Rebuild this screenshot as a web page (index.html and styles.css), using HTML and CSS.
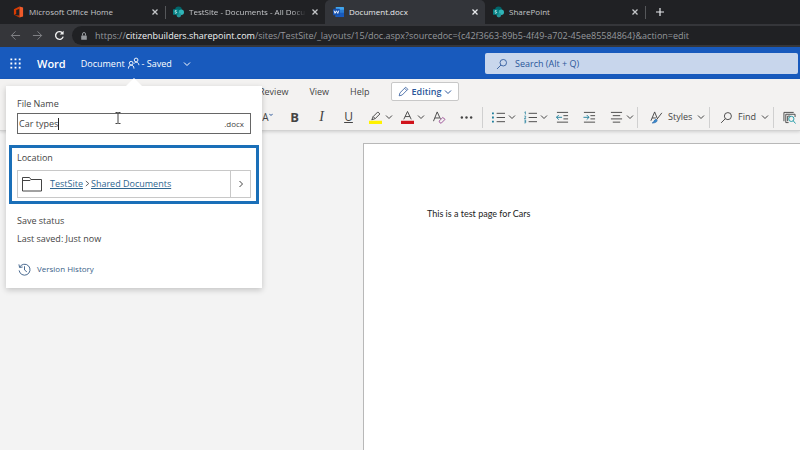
FILE: index.html
```html
<!DOCTYPE html>
<html lang="en">
<head>
    <meta charset="UTF-8">
    <meta name="viewport" content="width=device-width, initial-scale=1.0">
    <title>Document.docx</title>
    <link rel="stylesheet" href="styles.css">
</head>
<body>
    <svg class="defs" width="0" height="0" aria-hidden="true">
        <symbol id="close" viewBox="0 0 8 8"><path d="M1.5 1.5l5 5M6.5 1.5l-5 5" stroke-width="1.3"/></symbol>
        <symbol id="chevron" viewBox="0 0 8 8"><path d="M1 2.5l3 3 3-3"/></symbol>
        <symbol id="sharepoint" viewBox="0 0 12 12">
            <g stroke="none">
                <circle cx="6" cy="3.6" r="3.6" fill="#03656a"/>
                <circle cx="9" cy="6.3" r="3" fill="#2fb5b8"/>
                <circle cx="6.4" cy="9.4" r="2.5" fill="#25979b"/>
                <rect y="3" width="6" height="6" rx="0.6" fill="#038387"/>
            </g>
            <path d="M4 4.7c-.6-.5-1.9-.4-1.9.4 0 .9 1.9.6 1.9 1.5 0 .8-1.4.9-2 .4" stroke="#fff" stroke-width="0.8"/>
        </symbol>
        <symbol id="search" viewBox="0 0 14 14"><circle cx="8.5" cy="5.5" r="3.8"/><path d="M5.8 8.2l-4.6 4.6"/></symbol>
    </svg>

    <nav class="browser-tabs">
        <div class="tab">
            <svg class="favicon solid" viewBox="0 0 12 12"><path d="M1 3l6-3v2.700L3.500 3.800v4.400L1 9.200z" fill="#d83b01"/><path d="M1.500 9.400L7 9.800V12z" fill="#c43501"/><path d="M7 0l4 1.200v9.600L7 12z" fill="#ef5a2a"/></svg>
            <span class="tab-title">Microsoft Office Home</span>
            <button class="tab-close" aria-label="Close tab"><svg class="small"><use href="#close"/></svg></button>
        </div>
        <div class="tab divided">
            <svg class="favicon"><use href="#sharepoint"/></svg>
            <span class="tab-title fade">TestSite - Documents - All Documents</span>
            <button class="tab-close" aria-label="Close tab"><svg class="small"><use href="#close"/></svg></button>
        </div>
        <div class="tab active">
            <svg class="favicon solid" viewBox="0 0 12 12"><rect x="3" y="0.5" width="9" height="11" rx="0.6" fill="#41a5ee"/><path d="M3 3.5h9v3H3z" fill="#2b7cd3"/><path d="M3 6.5h9v5H3z" fill="#185abd"/><rect y="2.500" width="7.500" height="7" rx="0.5" fill="#1650ad"/><path d="M1.200 4.500l1 3 1.500-2.800 1.500 2.800 1-3" fill="none" stroke="#fff"/></svg>
            <span class="tab-title">Document.docx</span>
            <button class="tab-close" aria-label="Close tab"><svg class="small"><use href="#close"/></svg></button>
        </div>
        <div class="tab">
            <svg class="favicon"><use href="#sharepoint"/></svg>
            <span class="tab-title">SharePoint</span>
            <button class="tab-close" aria-label="Close tab"><svg class="small"><use href="#close"/></svg></button>
        </div>
        <button class="new-tab" aria-label="New tab"><svg class="small" viewBox="0 0 8 8"><path d="M4 0v8M0 4h8" stroke-width="1.2"/></svg></button>
    </nav>

    <div class="address-bar">
        <button class="nav-button" aria-label="Back"><svg class="nav-icon" viewBox="0 0 12 12"><path d="M11 6H1.5M6 1.5L1.5 6 6 10.5"/></svg></button>
        <button class="nav-button" aria-label="Forward"><svg class="nav-icon" viewBox="0 0 12 12"><path d="M1 6h9.5M6 1.5L10.5 6 6 10.5"/></svg></button>
        <button class="nav-button reload" aria-label="Reload"><svg class="nav-icon" viewBox="0 0 12 12"><path d="M10 7.2A4.2 4.2 0 1 1 9 3.1" stroke-width="1.5"/><path d="M10.5 0.8v4.2H6.3z" fill="currentColor" stroke="none"/></svg></button>
        <div class="omnibox">
            <svg class="small" viewBox="0 0 8 8"><rect x="1.2" y="3.4" width="5.6" height="4.4" rx="0.5" fill="currentColor" stroke="none"/><path d="M2.5 3.5V2a1.5 1.5 0 0 1 3 0v1.5"/></svg>
            <span class="url">https://<b>citizenbuilders.sharepoint.com</b>/sites/TestSite/_layouts/15/doc.aspx?sourcedoc={c42f3663-89b5-4f49-a702-45ee85584864}&amp;action=edit</span>
        </div>
    </div>

    <header class="app-header">
        <button class="waffle" aria-label="App launcher"><svg class="icon solid" viewBox="0 0 14 14"><path d="M1.5 1.5h2v2h-2zM6 1.5h2v2H6zM10.500 1.500h2v2h-2zM1.500 6h2v2h-2zM6 6h2v2H6zM10.500 6h2v2h-2zM1.500 10.500h2v2h-2zM6 10.500h2v2H6zM10.500 10.500h2v2h-2z"/></svg></button>
        <a class="app-name" href="#">Word</a>
        <button class="doc-title">
            <span>Document</span>
            <svg class="icon" viewBox="0 0 14 14"><circle cx="4.5" cy="6.7" r="2"/><path d="M1.500 12.500c0-5 6-5 6 0"/><circle cx="9.800" cy="3.200" r="2"/><path d="M7.800 7c1-2.400 5-1.600 5 1.800"/></svg>
            <span>- Saved</span>
            <svg class="small title-chevron"><use href="#chevron"/></svg>
        </button>
        <div class="search">
            <svg class="icon"><use href="#search"/></svg>
            <input type="text" aria-label="Search" placeholder="Search (Alt + Q)">
        </div>

        <section class="callout">
            <label for="fileName">File Name</label>
            <div class="name-box">
                <input type="text" id="fileName" value="Car types">
                <span class="caret"></span>
                <span class="extension">.docx</span>
            </div>
            <div class="location">
                <p>Location</p>
                <div class="location-box">
                    <svg class="folder" viewBox="0 0 20 16"><path d="M0.5 15V1.5h7L9 3.5h10.500V15zM0.500 4.500H8l1-1"/></svg>
                    <span class="path"><a href="#">TestSite</a><svg class="path-arrow" viewBox="0 0 6 8"><path d="M1 1l3.500 3L1 7"/></svg><a href="#">Shared Documents</a></span>
                    <button class="browse" aria-label="Browse"><svg class="small" viewBox="0 0 8 8"><path d="M2.5 1l3 3-3 3"/></svg></button>
                </div>
            </div>
            <p>Save status</p>
            <p>Last saved: Just now</p>
            <a class="history" href="#">
                <svg class="icon" viewBox="0 0 14 14"><path d="M1.8 4.5a5.9 5.9 0 1 1-.6 3.5M1 1.500l.7 3.300 3.300-.5M7 3.500v4l2.500 2"/></svg>
                Version History
            </a>
        </section>
    </header>

    <div class="ribbon">
        <nav class="ribbon-tabs">
            <button>Review</button>
            <button>View</button>
            <button>Help</button>
            <button class="editing">
                <svg class="icon" viewBox="0 0 14 14"><path d="M1.5 12.5l1-3.8 7.3-7.2 2.7 2.7-7.2 7.3zM8.500 3l2.500 2.500"/></svg>
                Editing
                <svg class="small"><use href="#chevron"/></svg>
            </button>
        </nav>
        <div class="toolbar">
            <button class="tool" aria-label="Shrink font"><span class="shrink">A</span><svg class="tick" viewBox="0 0 4 8"><path d="M0.3 0.8L2 2.5 3.7 0.8" stroke="#2b579a"/></svg></button>
            <button class="tool bold" aria-label="Bold">B</button>
            <button class="tool italic" aria-label="Italic">I</button>
            <button class="tool underline" aria-label="Underline">U</button>
            <button class="tool split" aria-label="Highlight">
                <svg class="icon" viewBox="0 0 14 14"><path d="M0 10.5h14V14H0z" fill="#fff200" stroke="none"/><path d="M3 9.5l1.5-3.5L9.500 1l2.200 2.200-5 5zM4.500 6l2.200 2.200"/></svg>
                <svg class="small"><use href="#chevron"/></svg>
            </button>
            <button class="tool split" aria-label="Font color">
                <svg class="icon" viewBox="0 0 14 14"><path d="M0 10.5h14V14H0z" fill="#d0131b" stroke="none"/><path d="M3 9L7 .5 11 9M4.300 6h5.400"/></svg>
                <svg class="small"><use href="#chevron"/></svg>
            </button>
            <button class="tool" aria-label="Clear formatting"><svg class="icon" viewBox="0 0 14 14"><path d="M0.500 11L4.500 1l3.500 7.500M2 7.500h5"/><path d="M6.500 11l4-4 2.500 2-4 4H7.800z" stroke="#9b4f96"/></svg></button>
            <button class="tool" aria-label="More"><svg class="icon solid" viewBox="0 0 14 14"><circle cx="2" cy="7" r="1.3"/><circle cx="7" cy="7" r="1.3"/><circle cx="12" cy="7" r="1.3"/></svg></button>
            <span class="separator"></span>
            <button class="tool split" aria-label="Bullets">
                <svg class="icon" viewBox="0 0 14 14"><path d="M5 2.5h9M5 7h9M5 11.5h9"/><path d="M0 1.5h2v2H0zM0 6h2v2H0zM0 10.5h2v2H0z" fill="#1f7f9c" stroke="none"/></svg>
                <svg class="small"><use href="#chevron"/></svg>
            </button>
            <button class="tool split" aria-label="Numbering">
                <svg class="icon" viewBox="0 0 14 14"><path d="M5 2.5h9M5 7h9M5 11.5h9"/><path d="M.5 1.500l1-.7v3M.3 5.500h1.500v1L.3 8.200h2M.3 9.800h1.500v3H.3M.6 11.300h1.200" stroke="#1f7f9c" stroke-width="0.8"/></svg>
                <svg class="small"><use href="#chevron"/></svg>
            </button>
            <button class="tool" aria-label="Decrease indent"><svg class="icon" viewBox="0 0 14 14"><path d="M1 1.5h12M8 5h5M8 8.5h5M1 12h12"/><path d="M6.5 6.8h-6M3 4.3L.5 6.8 3 9.3" stroke="#1f7f9c"/></svg></button>
            <button class="tool" aria-label="Increase indent"><svg class="icon" viewBox="0 0 14 14"><path d="M1 1.5h12M8 5h5M8 8.5h5M1 12h12"/><path d="M.5 6.8h6M4 4.3l2.5 2.5L4 9.3" stroke="#1f7f9c"/></svg></button>
            <button class="tool split" aria-label="Alignment">
                <svg class="icon" viewBox="0 0 14 14"><path d="M1 1.5h12M3 5h8M1 8.5h12M3 12h8"/></svg>
                <svg class="small"><use href="#chevron"/></svg>
            </button>
            <span class="separator"></span>
            <button class="tool split wide">
                <svg class="icon" viewBox="0 0 14 14"><path d="M1 10.5L5 1l2.800 7M2.300 7.500h4M12.800 2L7 9.500"/><path d="M2.500 12.800c2 0 1.500-3.300 3.700-3.600 2.400.4 1.800 3.600-3.700 3.600z" fill="#3a8fd0" stroke="#2b6cb0"/></svg>
                Styles
                <svg class="small"><use href="#chevron"/></svg>
            </button>
            <span class="separator"></span>
            <button class="tool split wide find">
                <svg class="icon"><use href="#search"/></svg>
                Find
                <svg class="small"><use href="#chevron"/></svg>
            </button>
            <span class="separator"></span>
            <button class="tool" aria-label="Reuse files"><svg class="icon" viewBox="0 0 14 14"><path d="M1 11V1.5h10.500M3 12.500V3.500h10v3M3 12.500h3"/><path d="M5 11V5.500h3"/><circle cx="9" cy="8.500" r="2.800" stroke="#1f9aa8"/><path d="M11 10.500l2.500 3" stroke="#1f9aa8"/></svg></button>
        </div>
    </div>

    <main class="canvas">
        <article class="page">
            <p>This is a test page for Cars</p>
        </article>
    </main>

    <svg class="pointer" viewBox="0 0 6 12" aria-hidden="true"><path d="M0.5 0.5h2l.5.5.5-.5h2M3 1v10M0.500 11.500h2l.5-.5.5.5h2"/></svg>
</body>
</html>
```
FILE: styles.css
```css
* {
    box-sizing: border-box;
}

body {
    font-family: "Open Sans", "Noto Sans", sans-serif;
    font-size: 9px;
    line-height: 14px;
    color: #444;
    background-color: #f3f3f3;
    margin: 0;
    min-height: 100vh;
    display: flex;
    flex-direction: column;
    overflow: hidden;
}

button,
input {
    font: inherit;
    color: inherit;
    background: none;
    border: none;
    padding: 0;
    margin: 0;
}

p {
    margin: 0;
}

svg {
    flex: none;
    fill: none;
    stroke: currentColor;
}

.solid {
    fill: currentColor;
    stroke: none;
}

.defs {
    position: absolute;
}

.icon {
    width: 13px;
    height: 13px;
}

.small {
    width: 8px;
    height: 8px;
}

button svg {
    display: block;
}

/* browser */
.browser-tabs {
    display: flex;
    height: 24px;
    padding-left: 5px;
    background-color: #202124;
    color: #c4c6c9;
    font-size: 8px;
}

.tab {
    display: flex;
    align-items: center;
    gap: 5px;
    flex: 0 1 160px;
    min-width: 0;
    padding: 0 6px 0 8px;
}

.tab.divided {
    background: linear-gradient(#55575a, #55575a) left center / 1px 13px no-repeat;
}

.tab.active {
    background-color: #33353a;
    border-radius: 5px 5px 0 0;
    color: #e8eaed;
}

.favicon {
    width: 11px;
    height: 12px;
}

.tab-title {
    flex: 1;
    overflow: hidden;
    white-space: nowrap;
}

.fade {
    -webkit-mask-image: linear-gradient(to right, #000 88%, transparent);
    mask-image: linear-gradient(to right, #000 88%, transparent);
}

.new-tab {
    padding: 0 11px;
    background: linear-gradient(#55575a, #55575a) left center / 1px 13px no-repeat;
    color: #e8eaed;
}

.address-bar {
    display: flex;
    align-items: center;
    height: 23px;
    padding-left: 4px;
    background-color: #35363a;
}

.nav-button {
    width: 22px;
    color: #85878a;
}

.nav-icon {
    width: 11px;
    height: 11px;
    margin: 0 auto;
}

.reload {
    color: #f1f1f1;
}

.omnibox {
    flex: 1;
    display: flex;
    align-items: center;
    gap: 7px;
    min-width: 0;
    height: 19px;
    margin-left: 2px;
    padding-left: 8px;
    border-radius: 10px 0 0 10px;
    background-color: #202124;
    color: #95989c;
}

.url {
    white-space: nowrap;
}

.url b {
    font-weight: normal;
    color: #f1f3f4;
}

/* word header */
.app-header {
    position: relative;
    display: flex;
    align-items: center;
    height: 32px;
    padding: 1px 2px 0 9px;
    background-color: #185abd;
    color: #fff;
}

.app-name {
    margin-left: 15px;
    font-size: 11px;
    font-weight: 600;
    color: #fff;
    text-decoration: none;
}

.doc-title {
    display: flex;
    align-items: center;
    gap: 2px;
    margin-left: 15px;
}

.title-chevron {
    margin-left: 9px;
}

.search {
    display: flex;
    align-items: center;
    gap: 7px;
    width: 313px;
    height: 21px;
    margin-left: auto;
    padding-left: 11px;
    border-radius: 2px;
    background-color: #c8d6ec;
    color: #2b579a;
}

.search .icon {
    width: 12px;
    height: 12px;
}

.search input {
    flex: 1;
    min-width: 0;
}

.search input::placeholder {
    color: #2b579a;
    opacity: 1;
}

/* file name callout */
.callout {
    position: absolute;
    top: 39px;
    left: 6px;
    z-index: 2;
    width: 256px;
    padding: 11px;
    background-color: #fff;
    color: #444;
    box-shadow: 0 2px 6px rgba(0, 0, 0, 0.2);
}

.callout::before {
    content: "";
    position: absolute;
    top: -8px;
    left: 120px;
    border: 8px solid transparent;
    border-top: none;
    border-bottom-color: #fff;
}

.callout label {
    display: block;
}

.name-box {
    display: flex;
    align-items: center;
    height: 21px;
    margin-top: 2px;
    padding: 0 6px 0 1px;
    border: 1px solid #666;
}

.name-box input {
    field-sizing: content;
}

.caret {
    width: 1px;
    height: 12px;
    background-color: #222;
}

.extension {
    margin-left: auto;
    font-size: 8px;
}

.location {
    margin: 11px -8px 10px;
    padding: 3px 5px;
    border: 3px solid #1a6fb8;
}

.location-box {
    display: flex;
    align-items: center;
    height: 28px;
    margin-top: 5px;
    padding-left: 4px;
    border: 1px solid #c8c8c8;
}

.folder {
    width: 20px;
    height: 16px;
}

.path {
    flex: 1;
    margin-left: 8px;
}

.path a {
    color: #2f6690;
}

.path-arrow {
    width: 5px;
    height: 7px;
    margin: 0 1px 0 2px;
}

.browse {
    align-self: stretch;
    width: 20px;
    border-left: 1px solid #c8c8c8;
}

.browse svg {
    margin: 0 auto;
}

.callout p + p {
    margin-top: 4px;
}

.history {
    display: flex;
    align-items: center;
    gap: 6px;
    margin: 16px 0 1px 1px;
    font-size: 8px;
    color: #3b5f88;
    text-decoration: none;
}

/* ribbon */
.ribbon {
    position: relative;
    background-color: #f3f2f1;
    border-bottom: 1px solid #d2d2d2;
    box-shadow: 0 1px 3px rgba(0, 0, 0, 0.15);
}

.ribbon-tabs {
    display: flex;
    align-items: center;
    gap: 21px;
    height: 25px;
    padding-left: 259px;
}

.editing {
    display: flex;
    align-items: center;
    gap: 3px;
    height: 19px;
    padding: 0 6px;
    border: 1px solid #c8c8c8;
    border-radius: 2px;
    background-color: #fff;
    color: #2b579a;
    font-weight: 600;
}

.editing .icon {
    width: 11px;
    height: 11px;
}

.toolbar {
    display: flex;
    align-items: center;
    height: 26px;
    padding-left: 254px;
    overflow: hidden;
}

.tool {
    display: flex;
    align-items: center;
    justify-content: center;
    flex: none;
    width: 27px;
    height: 22px;
}

.shrink {
    font-size: 10px;
}

.tick {
    width: 4px;
    height: 8px;
}

.bold {
    font-size: 13px;
    font-weight: 700;
}

.italic {
    font-family: "Liberation Serif", serif;
    font-size: 14px;
    font-style: italic;
}

.underline {
    font-size: 12px;
    text-decoration: underline;
}

.split {
    justify-content: flex-start;
    width: 32px;
    gap: 3px;
    padding-left: 7px;
}

.wide {
    width: 67px;
    gap: 5px;
    padding-left: 10px;
}

.find {
    width: 59px;
    padding-left: 8px;
}

.separator {
    flex: none;
    width: 1px;
    height: 21px;
    margin: 0 2px;
    background-color: #d0d0d0;
}

/* document */
.canvas {
    flex: 1;
    display: flex;
    padding: 12px 0 0 363px;
}

.page {
    flex: 1;
    padding: 63px;
    border: 1px solid #b8b8b8;
    border-width: 1px 0 0 1px;
    background-color: #fff;
    font-family: Lato, "Open Sans", sans-serif;
    color: #222;
}

.pointer {
    position: absolute;
    left: 115px;
    top: 112px;
    z-index: 3;
    width: 6px;
    height: 12px;
    color: #444;
}
```
